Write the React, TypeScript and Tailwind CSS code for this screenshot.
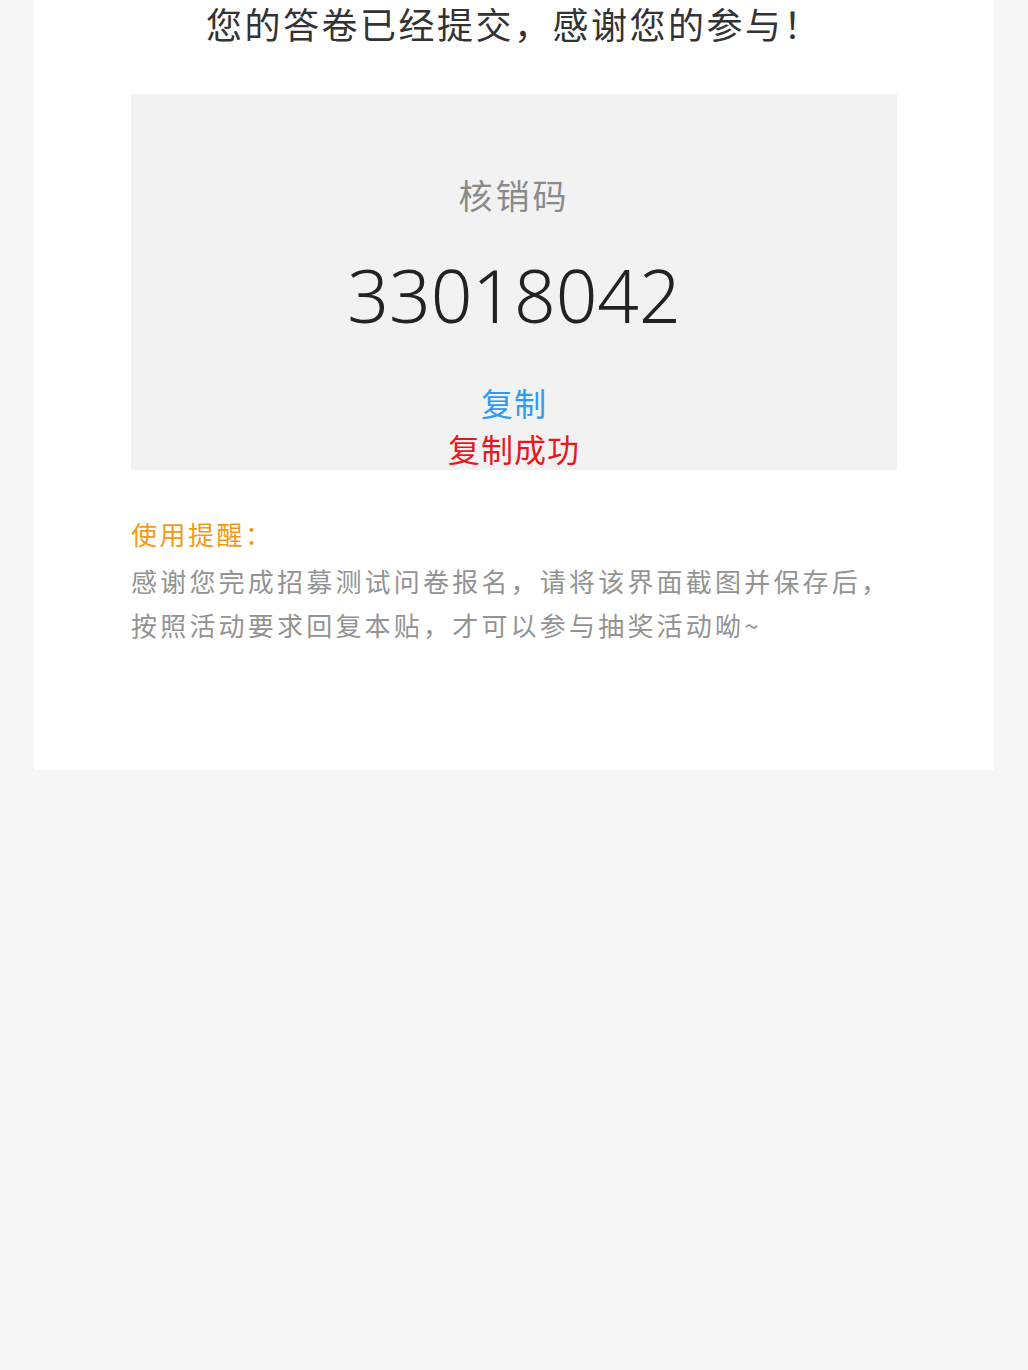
export default function App() {
  const font = { fontFamily: '"Noto Sans CJK SC", "Noto Sans", sans-serif' }

  return (
    <div className="min-h-[1370px] w-full bg-[#f6f6f6]" style={font}>
      <div className="ml-[34px] h-[770px] w-[960px] bg-white pt-[1px]">
        <h1 className="text-center text-[36px] font-normal leading-[44px] tracking-[2.5px] text-[#333]">
          您的答卷已经提交，感谢您的参与！
        </h1>

        <div className="mx-auto mt-[49px] h-[376px] w-[766px] bg-[#f2f2f2] pt-[76px] text-center">
          <p className="text-[34px] leading-[50px] tracking-[3px] text-[#8a8a8a]">核销码</p>
          <p
            className="mt-[30px] text-[73px] font-light leading-[90px] text-[#222]"
            style={{ fontFamily: '"Noto Sans", sans-serif' }}
          >
            33018042
          </p>
          <button className="mt-[39px] block w-full text-[32px] leading-[46px] tracking-[1px] text-[#2d9bef]">
            复制
          </button>
          <p className="text-[32px] leading-[46px] tracking-[1px] text-[#e8191c]">复制成功</p>
        </div>

        <div className="mx-auto mt-[42px] w-[766px]">
          <p className="text-[26px] leading-[44px] tracking-[2.5px] text-[#f29a17]">使用提醒：</p>
          <p className="mt-[3px] text-[26px] leading-[44px] tracking-[3.2px] text-[#939393]">
            感谢您完成招募测试问卷报名，请将该界面截图并保存后，按照活动要求回复本贴，才可以参与抽奖活动呦~
          </p>
        </div>
      </div>
    </div>
  )
}
